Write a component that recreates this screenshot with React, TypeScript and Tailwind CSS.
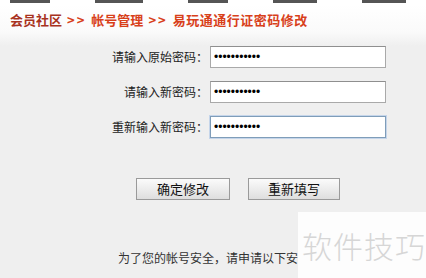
import React from "react";

const font = { fontFamily: '"Noto Sans CJK SC", "Liberation Sans", sans-serif' };

function Row({ label, focused }: { label: string; focused?: boolean }) {
  return (
    <div className="flex items-center">
      <span className="w-[210px] pr-[2px] text-right text-[12px] text-[#222]">{label}</span>
      <div
        className={
          "flex h-[22px] w-[176px] items-center bg-white pl-[3px] " +
          (focused
            ? "border border-[#7f9db9] shadow-[0_0_0_1px_#c5d5ea]"
            : "border border-[#a9a9a9] border-t-[#8f8f8f]")
        }
      >
        <span className="font-['Liberation_Sans'] text-[12px] leading-none text-black">•••••••••••</span>
      </div>
    </div>
  );
}

export default function App() {
  return (
    <div className="relative h-[278px] w-[426px] overflow-hidden bg-[#efefef]" style={font}>
      {/* bottoms of the nav labels above, clipped off */}
      <div className="flex h-[5px] items-start gap-[45px] bg-white pl-[10px]">
        <div className="h-[3px] w-[40px] bg-[#555]" />
        <div className="h-[3px] w-[48px] bg-[#555]" />
        <div className="h-[3px] w-[40px] bg-[#555]" />
        <div className="h-[3px] w-[44px] bg-[#555]" />
        <div className="h-[3px] w-[44px] bg-[#555]" />
      </div>

      {/* breadcrumb */}
      <div className="flex h-[27px] items-center bg-gradient-to-b from-white to-[#fafafa] pl-[10px] pt-[2px] text-[13px] font-bold">
        <span className="text-[#a8321e]">会员社区</span>
        <span className="mx-[5px] tracking-[2px] text-[#d8401a]">&gt;&gt;</span>
        <span className="text-[#d8401a]">帐号管理</span>
        <span className="mx-[5px] tracking-[2px] text-[#d8401a]">&gt;&gt;</span>
        <span className="tracking-[0.5px] text-[#d8401a]">易玩通通行证密码修改</span>
      </div>

      <div className="h-[14px] bg-gradient-to-b from-[#fafafa] to-[#efefef]" />

      {/* form */}
      <div className="flex flex-col gap-[13px]">
        <Row label="请输入原始密码：" />
        <Row label="请输入新密码：" />
        <Row label="重新输入新密码：" focused />
      </div>

      {/* buttons */}
      <div className="mt-[40px] flex gap-[18px] pl-[136px]">
        <button className="h-[22px] w-[94px] border border-[#9a9a9a] bg-gradient-to-b from-[#fbfbfb] to-[#dedede] text-[13px] text-[#111]">
          确定修改
        </button>
        <button className="h-[22px] w-[92px] border border-[#9a9a9a] bg-gradient-to-b from-[#fbfbfb] to-[#dedede] text-[13px] text-[#111]">
          重新填写
        </button>
      </div>

      <div className="mt-[49px] pl-[118px] text-[12px] text-[#333]">为了您的帐号安全，请申请以下安</div>

      {/* watermark */}
      <div className="absolute left-[298px] top-[212px] flex h-[66px] w-[128px] items-center bg-white/90 pl-[4px]">
        <span className="text-[30px] font-light tracking-[1px] text-[#d6d6d6]">软件技巧</span>
      </div>
    </div>
  );
}
